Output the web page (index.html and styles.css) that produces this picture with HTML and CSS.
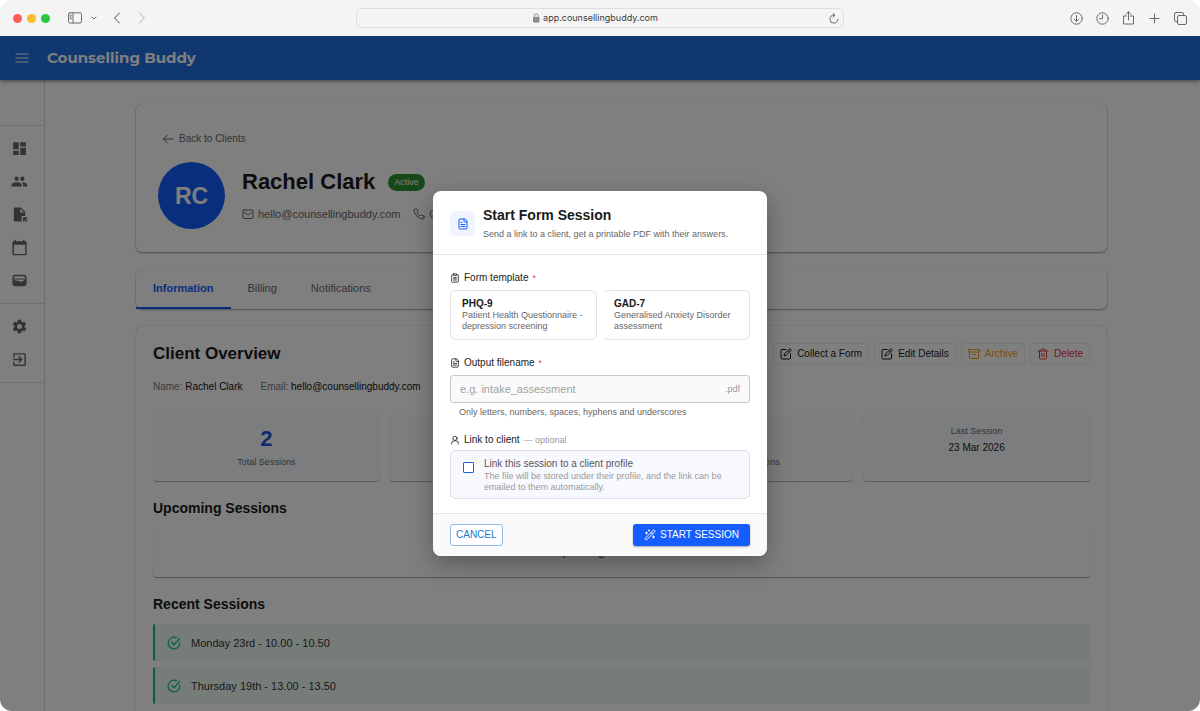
FILE: index.html
```
<!DOCTYPE html>
<html lang="en">

<head>
    <meta charset="UTF-8">
    <meta name="viewport" content="width=device-width, initial-scale=1.0">
    <title>Counselling Buddy</title>
    <link rel="stylesheet" href="styles.css">
</head>

<body>
    <!-- Icon sprite -->
    <svg class="sprite" aria-hidden="true">
        <symbol id="i-file" viewBox="0 0 24 24">
            <path d="M15 2H6a2 2 0 0 0-2 2v16a2 2 0 0 0 2 2h12a2 2 0 0 0 2-2V7Z" />
            <path d="M14 2v4a2 2 0 0 0 2 2h4M10 9H8M16 13H8M16 17H8" />
        </symbol>
        <symbol id="i-clipboard" viewBox="0 0 24 24">
            <rect x="8" y="2" width="8" height="4" rx="1" />
            <path d="M16 4h2a2 2 0 0 1 2 2v14a2 2 0 0 1-2 2H6a2 2 0 0 1-2-2V6a2 2 0 0 1 2-2h2M9 11h6M9 14h6M9 17h6" />
        </symbol>
        <symbol id="i-user" viewBox="0 0 24 24">
            <circle cx="12" cy="8" r="5" />
            <path d="M4 22v-2a6 6 0 0 1 6-6h4a6 6 0 0 1 6 6v2" />
        </symbol>
        <symbol id="i-wand" viewBox="0 0 24 24">
            <path d="m21.6 3.6-1.2-1.2a1.2 1.2 0 0 0-1.7 0L2.4 18.6a1.2 1.2 0 0 0 0 1.7l1.2 1.3a1.2 1.2 0 0 0 1.8 0L21.6 5.4a1.2 1.2 0 0 0 0-1.8M14 7l3 3M5 6v4M19 14v4M10 2v2M7 8H3M21 16h-4M11 3H9" />
        </symbol>
        <symbol id="i-arrow-left" viewBox="0 0 24 24">
            <path d="m11 4-8 8 8 8M3 12h19" />
        </symbol>
        <symbol id="i-mail" viewBox="0 0 24 24">
            <rect x="2" y="4" width="20" height="17" rx="2" />
            <path d="m5 9 7 5 7-5" />
        </symbol>
        <symbol id="i-phone" viewBox="0 0 24 24">
            <path d="M22 16.9v3a2 2 0 0 1-2.2 2 19.8 19.8 0 0 1-8.6-3.1 19.5 19.5 0 0 1-6-6A19.8 19.8 0 0 1 2.1 4.2 2 2 0 0 1 4.1 2h3a2 2 0 0 1 2 1.7c.1 1 .4 1.9.7 2.8a2 2 0 0 1-.5 2.1L8.1 9.9a16 16 0 0 0 6 6l1.3-1.3a2 2 0 0 1 2.1-.4c.9.3 1.8.6 2.8.7a2 2 0 0 1 1.7 2Z" />
        </symbol>
        <symbol id="i-edit" viewBox="0 0 24 24">
            <path d="M12 3H4a2 2 0 0 0-2 2v15a2 2 0 0 0 2 2h15a2 2 0 0 0 2-2v-8" />
            <path d="M18.4 2.6a2.1 2.1 0 0 1 3 3L12 15l-4 1 1-4ZM16 5l3 3" />
        </symbol>
        <symbol id="i-archive" viewBox="0 0 24 24">
            <rect x="1" y="3" width="22" height="5" />
            <path d="M3 8v13h18V8M9 13h6" />
        </symbol>
        <symbol id="i-trash" viewBox="0 0 24 24">
            <path d="M2 6h20M5 6v14a2 2 0 0 0 2 2h10a2 2 0 0 0 2-2V6M8 6V4a2 2 0 0 1 2-2h4a2 2 0 0 1 2 2v2M10 11v6M14 11v6" />
        </symbol>
        <symbol id="i-check" viewBox="0 0 24 24">
            <path d="M22 11v1a10 10 0 1 1-6-9.2" />
            <path d="m8 11 4 4L22 4" />
        </symbol>
    </svg>

    <div class="window">
        <header class="chrome">
            <div class="chrome-side">
                <span class="dot red"></span>
                <span class="dot yellow"></span>
                <span class="dot green"></span>
                <button class="chrome-btn sidebar-btn" type="button" aria-label="Sidebar">
                    <svg width="14" height="12" viewBox="0 0 14 12">
                        <rect x=".5" y=".8" width="13" height="10.2" rx="1.5" />
                        <path d="M5 1v10M2 3.2h1.3M2 5h1.3M2 6.8h1.3" />
                    </svg>
                </button>
                <button class="chrome-btn chevron-btn" type="button" aria-label="Tab groups">
                    <svg width="6" height="6" viewBox="0 0 6 6"><path d="m1 2 2 2 2-2" /></svg>
                </button>
                <button class="chrome-btn back-btn" type="button" aria-label="Back">
                    <svg width="8" height="12" viewBox="0 0 8 12"><path d="M6.5 1 1.5 6l5 5" /></svg>
                </button>
                <button class="chrome-btn forward-btn" type="button" aria-label="Forward">
                    <svg width="8" height="12" viewBox="0 0 8 12"><path d="m1.5 1 5 5-5 5" /></svg>
                </button>
            </div>
            <div class="address">
                <span class="address-text">
                    <svg class="lock" width="8" height="10" viewBox="0 0 8 10">
                        <rect x="1" y="4" width="6.5" height="5.5" rx="1" fill="#8a8a8a" />
                        <path d="M2.3 4V2.8a1.9 1.9 0 0 1 3.9 0V4" fill="none" stroke="#8a8a8a" />
                    </svg>
                    app.counsellingbuddy.com
                </span>
                <button class="chrome-btn" type="button" aria-label="Reload">
                    <svg width="10" height="11" viewBox="0 0 10 11"><path d="M5.5 2.2H5a4 4 0 1 0 4 4M4 .3l2 1.9-2 1.9" /></svg>
                </button>
            </div>
            <div class="chrome-side chrome-right">
                <button class="chrome-btn" type="button" aria-label="Downloads">
                    <svg width="13" height="13" viewBox="0 0 13 13"><circle cx="6.5" cy="6.5" r="5.7" /><path d="M6.5 3.5v5.7M4.3 7.2l2.2 2.2 2.2-2.2" /></svg>
                </button>
                <button class="chrome-btn" type="button" aria-label="History">
                    <svg width="13" height="13" viewBox="0 0 13 13"><circle cx="6.5" cy="6.5" r="5.7" /><path d="M6.5 3v3.7H3.5" /></svg>
                </button>
                <button class="chrome-btn" type="button" aria-label="Share">
                    <svg width="13" height="14" viewBox="0 0 13 14"><path d="M4.5 5h-3v8h10V5h-3M6.5 9V1M4 3.3 6.5.8 9 3.3" /></svg>
                </button>
                <button class="chrome-btn" type="button" aria-label="New tab">
                    <svg width="13" height="13" viewBox="0 0 13 13"><path d="M6.5 2v9M2 6.5h9" /></svg>
                </button>
                <button class="chrome-btn" type="button" aria-label="Tab overview">
                    <svg width="13" height="13" viewBox="0 0 13 13"><rect x="3.5" y="3.5" width="9" height="9" rx="1.5" /><path d="M3.5 9.5H2A1.5 1.5 0 0 1 .5 8V2A1.5 1.5 0 0 1 2 .5h6A1.5 1.5 0 0 1 9.5 2v1.5" /></svg>
                </button>
            </div>
        </header>

        <div class="app">
            <div class="topbar">
                <button class="menu-btn" type="button" aria-label="Menu">
                    <svg width="14" height="10" viewBox="0 0 14 10"><path d="M.5 1h13M.5 5h13M.5 9h13" /></svg>
                </button>
                <span class="brand">Counselling Buddy</span>
            </div>

            <div class="layout">
                <nav class="sidebar">
                    <div class="sidebar-top"></div>
                    <div class="nav-group">
                        <a class="nav-item" href="#" aria-label="Dashboard">
                            <svg viewBox="0 0 24 24"><path d="M3 13h8V3H3v10zm0 8h8v-6H3v6zm10 0h8V11h-8v10zm0-18v6h8V3h-8z" /></svg>
                        </a>
                        <a class="nav-item" href="#" aria-label="Clients">
                            <svg viewBox="0 0 24 24"><path d="M16 11c1.66 0 2.99-1.34 2.99-3S17.66 5 16 5s-3 1.34-3 3 1.34 3 3 3zm-8 0c1.66 0 2.99-1.34 2.99-3S9.66 5 8 5 5 6.34 5 8s1.34 3 3 3zm0 2c-2.33 0-7 1.17-7 3.5V19h14v-2.5c0-2.33-4.67-3.5-7-3.5zm8 0c-.29 0-.62.02-.97.05 1.16.84 1.97 1.97 1.97 3.45V19h6v-2.5c0-2.33-4.67-3.5-7-3.5z" /></svg>
                        </a>
                        <a class="nav-item" href="#" aria-label="Forms">
                            <svg viewBox="0 0 24 24"><path d="M14 2H6a2 2 0 0 0-2 2v16a2 2 0 0 0 2 2h9v-8h5V8Zm-1 7V3.5L18.5 9ZM17 16h6v2h-2.6l3.1 3.1-1.4 1.4-3.1-3.1V22h-2Z" /></svg>
                        </a>
                        <a class="nav-item" href="#" aria-label="Calendar">
                            <svg viewBox="0 0 24 24"><path d="M20 3h-1V1h-2v2H7V1H5v2H4a2 2 0 0 0-2 2v16a2 2 0 0 0 2 2h16a2 2 0 0 0 2-2V5a2 2 0 0 0-2-2zm0 18H4V8h16v13z" /></svg>
                        </a>
                        <a class="nav-item" href="#" aria-label="Billing">
                            <svg viewBox="0 0 24 24"><path d="M18 4H6a4 4 0 0 0-4 4v8a4 4 0 0 0 4 4h12a4 4 0 0 0 4-4V8a4 4 0 0 0-4-4zM4 8.5C4 7 5 6 6.5 6h11C19 6 20 7 20 8.5V9H4zm11.8 5.1a1 1 0 0 1-.9.2L4 11.2V10.5h16z" /></svg>
                        </a>
                    </div>
                    <div class="nav-group">
                        <a class="nav-item" href="#" aria-label="Settings">
                            <svg viewBox="0 0 24 24"><path d="M19.14 12.94c.04-.3.06-.61.06-.94 0-.32-.02-.64-.07-.94l2.03-1.58c.18-.14.23-.41.12-.61l-1.92-3.32c-.12-.22-.37-.29-.59-.22l-2.39.96c-.5-.38-1.03-.7-1.62-.94l-.36-2.54c-.04-.24-.24-.41-.48-.41h-3.84c-.24 0-.43.17-.47.41l-.36 2.54c-.59.24-1.13.57-1.62.94l-2.39-.96c-.22-.08-.47 0-.59.22L2.74 8.87c-.12.21-.08.47.12.61l2.03 1.58c-.05.3-.09.63-.09.94s.02.64.07.94l-2.03 1.58c-.18.14-.23.41-.12.61l1.92 3.32c.12.22.37.29.59.22l2.39-.96c.5.38 1.03.7 1.62.94l.36 2.54c.05.24.24.41.48.41h3.84c.24 0 .44-.17.47-.41l.36-2.54c.59-.24 1.13-.56 1.62-.94l2.39.96c.22.08.47 0 .59-.22l1.92-3.32c.12-.22.07-.47-.12-.61l-2.01-1.58zM12 15.6c-1.98 0-3.6-1.62-3.6-3.6s1.62-3.6 3.6-3.6 3.6 1.62 3.6 3.6-1.62 3.6-3.6 3.6z" /></svg>
                        </a>
                        <a class="nav-item" href="#" aria-label="Sign out">
                            <svg viewBox="0 0 24 24"><path d="M10.09 15.59 11.5 17l5-5-5-5-1.41 1.41L12.67 11H3v2h9.67l-2.58 2.59zM19 3H5c-1.11 0-2 .9-2 2v4h2V5h14v14H5v-4H3v4c0 1.1.89 2 2 2h14c1.1 0 2-.9 2-2V5c0-1.1-.9-2-2-2z" /></svg>
                        </a>
                    </div>
                </nav>

                <main class="main">
                    <section class="card profile">
                        <a class="back-link" href="#"><svg class="icon"><use href="#i-arrow-left" /></svg>Back to Clients</a>
                        <div class="profile-row">
                            <div class="avatar">RC</div>
                            <div class="profile-info">
                                <div class="name-row">
                                    <h1>Rachel Clark</h1>
                                    <span class="badge">Active</span>
                                </div>
                                <div class="contact-row">
                                    <span><svg class="icon"><use href="#i-mail" /></svg>hello@counsellingbuddy.com</span>
                                    <span><svg class="icon"><use href="#i-phone" /></svg>07700 900123</span>
                                </div>
                            </div>
                        </div>
                    </section>

                    <section class="card tabs">
                        <button class="tab active" type="button">Information</button>
                        <button class="tab" type="button">Billing</button>
                        <button class="tab" type="button">Notifications</button>
                    </section>

                    <section class="card overview">
                        <div class="overview-head">
                            <h2>Client Overview</h2>
                            <div class="actions">
                                <button class="action" type="button"><svg class="icon"><use href="#i-edit" /></svg>Collect a Form</button>
                                <button class="action" type="button"><svg class="icon"><use href="#i-edit" /></svg>Edit Details</button>
                                <button class="action archive" type="button"><svg class="icon"><use href="#i-archive" /></svg>Archive</button>
                                <button class="action delete" type="button"><svg class="icon"><use href="#i-trash" /></svg>Delete</button>
                            </div>
                        </div>
                        <div class="details">
                            <span>Name: <b>Rachel Clark</b></span>
                            <span>Email: <b>hello@counsellingbuddy.com</b></span>
                        </div>
                        <div class="stats">
                            <div class="stat"><strong>2</strong><span>Total Sessions</span></div>
                            <div class="stat"><strong>2</strong><span>Completed</span></div>
                            <div class="stat"><strong>0</strong><span>Upcoming Sessions</span></div>
                            <div class="stat last"><span>Last Session</span><em>23 Mar 2026</em></div>
                        </div>
                        <h3>Upcoming Sessions</h3>
                        <div class="empty">No upcoming sessions scheduled</div>
                        <h3>Recent Sessions</h3>
                        <ul class="sessions">
                            <li><svg class="icon"><use href="#i-check" /></svg>Monday 23rd - 10.00 - 10.50</li>
                            <li><svg class="icon"><use href="#i-check" /></svg>Thursday 19th - 13.00 - 13.50</li>
                        </ul>
                    </section>
                </main>
            </div>

            <div class="overlay">
                <form class="modal" role="dialog" aria-labelledby="modal-title">
                    <div class="modal-head">
                        <span class="modal-icon"><svg class="icon"><use href="#i-file" /></svg></span>
                        <div>
                            <h2 id="modal-title">Start Form Session</h2>
                            <p>Send a link to a client, get a printable PDF with their answers.</p>
                        </div>
                    </div>

                    <div class="modal-body">
                        <div class="label"><svg class="icon"><use href="#i-clipboard" /></svg>Form template <sup>*</sup></div>
                        <div class="templates">
                            <button class="template" type="button">
                                <b>PHQ-9</b>
                                <span>Patient Health Questionnaire - depression screening</span>
                            </button>
                            <button class="template" type="button">
                                <b>GAD-7</b>
                                <span>Generalised Anxiety Disorder assessment</span>
                            </button>
                        </div>

                        <label class="label" for="filename"><svg class="icon"><use href="#i-file" /></svg>Output filename <sup>*</sup></label>
                        <div class="field">
                            <input id="filename" type="text" placeholder="e.g. intake_assessment">
                            <span>.pdf</span>
                        </div>
                        <p class="helper">Only letters, numbers, spaces, hyphens and underscores</p>

                        <div class="label"><svg class="icon"><use href="#i-user" /></svg>Link to client <small>— optional</small></div>
                        <label class="link-box" for="link">
                            <input id="link" type="checkbox">
                            <span>
                                Link this session to a client profile
                                <small>The file will be stored under their profile, and the link can be emailed to them automatically.</small>
                            </span>
                        </label>
                    </div>

                    <div class="modal-foot">
                        <button class="btn-cancel" type="button">CANCEL</button>
                        <button class="btn-start" type="button"><svg class="icon"><use href="#i-wand" /></svg>START SESSION</button>
                    </div>
                </form>
            </div>
        </div>
    </div>
</body>

</html>
```
FILE: styles.css
```
* {
    margin: 0;
    padding: 0;
    box-sizing: border-box;
}

body {
    background: #fff;
    color: #1a1a1a;
    font-family: "Liberation Sans", Arial, sans-serif;
    font-size: 11px;
    line-height: 14px;
}

button,
input {
    font: inherit;
    color: inherit;
}

button {
    background: none;
    border: none;
    cursor: pointer;
}

a {
    color: inherit;
    text-decoration: none;
}

.sprite {
    display: none;
}

.icon {
    width: 12px;
    height: 12px;
    flex: none;
    fill: none;
    stroke: currentColor;
    stroke-width: 2;
    stroke-linecap: round;
    stroke-linejoin: round;
}

.window {
    display: flex;
    flex-direction: column;
    height: 100vh;
    border-radius: 12px;
    overflow: hidden;
}

/* Browser bar */
.chrome {
    display: flex;
    align-items: center;
    height: 36px;
    flex: none;
    padding: 0 13px;
    background: #f4f4f4;
}

.chrome-side {
    display: flex;
    align-items: center;
    flex: 1;
}

.chrome-right {
    justify-content: flex-end;
    gap: 13px;
}

.dot {
    width: 9px;
    height: 9px;
    margin-right: 5px;
    border-radius: 50%;
}

.red {
    background: #fc5b57;
}

.yellow {
    background: #fdbc2e;
}

.green {
    background: #27c840;
}

.chrome-btn {
    display: flex;
    color: #6b6b6b;

    svg {
        fill: none;
        stroke: currentColor;
        stroke-linecap: round;
        stroke-linejoin: round;
    }
}

.sidebar-btn {
    margin-left: 13px;
}

.chevron-btn {
    margin-left: 9px;
}

.back-btn {
    margin-left: 16px;
    color: #4a4a4a;
}

.forward-btn {
    margin-left: 17px;
    color: #b0b0b0;
}

.address {
    display: flex;
    align-items: center;
    width: 488px;
    height: 20px;
    padding: 0 4px;
    border: 1px solid #dedede;
    border-radius: 6px;
    color: #3c3c3c;
    font-family: Inter, sans-serif;
    font-size: 9px;
}

.address-text {
    display: flex;
    flex: 1;
    align-items: center;
    justify-content: center;
    gap: 3px;
}

/* App */
.app {
    position: relative;
    display: flex;
    flex: 1;
    flex-direction: column;
    min-height: 0;
    overflow: hidden;
}

.topbar {
    position: relative;
    display: flex;
    align-items: center;
    gap: 18px;
    height: 44px;
    flex: none;
    padding: 0 15px;
    background: #206ee0;
    color: #fff;
    box-shadow: 0 1px 4px rgba(0, 0, 0, 0.5);
}

.menu-btn svg {
    display: block;
    stroke: #fff;
    stroke-width: 1;
}

.brand {
    font-family: Montserrat, Inter, sans-serif;
    font-size: 15px;
    font-weight: 700;
}

.layout {
    display: flex;
    flex: 1;
    min-height: 0;
}

.sidebar {
    width: 45px;
    flex: none;
    border-right: 1px solid #dedede;
}

.sidebar-top {
    height: 46px;
    border-bottom: 1px solid #dedede;
}

.nav-group {
    padding: 6px 0;
    border-bottom: 1px solid #dedede;
}

.nav-item {
    display: flex;
    align-items: center;
    height: 33px;
    padding-left: 11px;

    svg {
        width: 17px;
        height: 17px;
        fill: #666;
    }
}

.main {
    flex: 1;
    padding: 24px 93px 0 91px;
}

.card {
    margin-bottom: 17px;
    border-radius: 6px;
    box-shadow: 0 1px 2px rgba(0, 0, 0, 0.4), 0 0 1px rgba(0, 0, 0, 0.2);
}

.profile {
    height: 148px;
    padding: 28px 22px 0;
}

.back-link {
    display: flex;
    align-items: center;
    gap: 5px;
    padding-left: 4px;
    color: #666;
    font-size: 10px;
}

.profile-row {
    display: flex;
    gap: 17px;
    margin-top: 16px;
}

.avatar {
    display: flex;
    align-items: center;
    justify-content: center;
    width: 67px;
    height: 67px;
    border-radius: 50%;
    background: #155dfc;
    color: #fff;
    font-size: 23px;
    font-weight: bold;
}

.name-row {
    display: flex;
    align-items: center;
    gap: 13px;
    margin-top: 7px;

    h1 {
        font-size: 22px;
        line-height: 26px;
    }
}

.badge {
    height: 17px;
    padding: 0 6px;
    border-radius: 9px;
    background: #2e9033;
    color: #fff;
    font-size: 9px;
    line-height: 17px;
}

.contact-row {
    display: flex;
    gap: 13px;
    margin-top: 12px;
    color: #666;

    span {
        display: flex;
        align-items: center;
        gap: 4px;
    }
}

.tabs {
    display: flex;
    height: 40px;
}

.tab {
    padding: 0 17px;
    border-bottom: 2px solid transparent;
    color: #666;
}

.tab.active {
    border-color: #155dfc;
    color: #155dfc;
    font-weight: bold;
}

.overview {
    height: 460px;
    padding: 17px;
    box-shadow: 0 0 1px rgba(0, 0, 0, 0.5);

    h3 {
        margin-top: 18px;
        font-size: 14px;
        line-height: 18px;
    }
}

.overview-head {
    display: flex;
    align-items: center;
    justify-content: space-between;

    h2 {
        font-size: 17px;
        line-height: 22px;
    }
}

.actions {
    display: flex;
    gap: 5px;
}

.action {
    display: flex;
    align-items: center;
    gap: 5px;
    height: 22px;
    padding: 0 6px;
    border: 1px solid #eee;
    border-radius: 3px;
    font-size: 10px;
}

.archive {
    color: #fb9c0c;
}

.delete {
    color: #e53935;
}

.details {
    display: flex;
    gap: 18px;
    margin-top: 15px;
    color: #777;
    font-size: 10px;

    b {
        color: #111;
        font-weight: normal;
    }
}

.stats {
    display: grid;
    grid-template-columns: repeat(4, 1fr);
    gap: 10px;
    margin-top: 20px;
}

.stat {
    display: flex;
    flex-direction: column;
    align-items: center;
    height: 67px;
    padding-top: 12px;
    border-radius: 4px;
    background: #f8fbff;
    box-shadow: 0 1px 1px rgba(0, 0, 0, 0.3);
    color: #666;
    font-size: 9px;

    strong {
        color: #2257dd;
        font-size: 22px;
        line-height: 26px;
    }

    span {
        margin-top: 3px;
    }

    em {
        margin-top: 3px;
        color: #222;
        font-size: 10px;
        font-style: normal;
    }
}

.stat.last {
    padding-top: 7px;
}

.empty {
    height: 50px;
    margin-top: 10px;
    border-radius: 3px;
    box-shadow: 0 1px 1px rgba(0, 0, 0, 0.35);
    line-height: 50px;
    text-align: center;
}

.sessions {
    margin-top: 11px;
    list-style: none;

    li {
        display: flex;
        align-items: center;
        gap: 10px;
        height: 37px;
        margin-bottom: 6px;
        padding-left: 12px;
        border-left: 2px solid #10b981;
        border-radius: 2px;
        background: #ecf8f1;
        color: #333;
    }

    .icon {
        width: 14px;
        height: 14px;
        color: #10b981;
    }
}

/* Start Form Session dialog */
.overlay {
    position: absolute;
    inset: 0;
    display: flex;
    align-items: center;
    justify-content: center;
    background: rgba(0, 0, 0, 0.5);
}

.modal {
    width: 334px;
    border-radius: 8px;
    background: #fff;
    box-shadow: 0 8px 24px rgba(0, 0, 0, 0.3);
    overflow: hidden;
}

.modal-head {
    display: flex;
    align-items: center;
    gap: 8px;
    height: 64px;
    padding: 2px 17px 0;
    border-bottom: 1px solid #e4e4e4;

    h2 {
        font-size: 14px;
        line-height: 18px;
    }

    p {
        margin-top: 3px;
        color: #666;
        font-size: 9px;
    }
}

.modal-icon {
    display: flex;
    align-items: center;
    justify-content: center;
    width: 25px;
    height: 25px;
    border-radius: 6px;
    background: #eff4ff;
    color: #155dfc;
}

.modal-body {
    padding: 16px 17px 14px;
}

.label {
    display: flex;
    align-items: center;
    gap: 4px;
    color: #222;
    font-size: 10px;

    .icon {
        width: 10px;
        height: 10px;
    }

    sup {
        color: #e53935;
    }

    small {
        color: #999;
        font-size: 9px;
    }
}

.templates {
    display: grid;
    grid-template-columns: 1fr 1fr;
    gap: 6px;
    margin: 5px 0 16px;
}

.template {
    height: 50px;
    padding: 0 11px;
    border: 1px solid #e2e2e2;
    border-radius: 6px;
    text-align: left;

    b {
        display: block;
        font-size: 10px;
        line-height: 12px;
    }

    span {
        display: block;
        color: #666;
        font-size: 9px;
        line-height: 11px;
    }
}

.template + .template {
    padding: 0 10px;
    border-left-color: transparent;
}

.field {
    display: flex;
    align-items: center;
    height: 28px;
    margin-top: 5px;
    padding: 0 9px;
    border: 1px solid #c8c8c8;
    border-radius: 3px;
    background: #fafafa;

    input {
        flex: 1;
        min-width: 0;
        border: none;
        outline: none;
        background: none;
    }

    input::placeholder {
        color: #a2a2a2;
    }

    span {
        color: #999;
        font-size: 9px;
    }
}

.helper {
    margin: 4px 0 16px 9px;
    color: #666;
    font-size: 9px;
    line-height: 10px;
}

.link-box {
    display: flex;
    gap: 10px;
    height: 49px;
    margin-top: 3px;
    padding: 6px 12px;
    border: 1px solid #dde0e8;
    border-radius: 6px;
    background: #f8f9ff;
    color: #555;
    font-size: 10px;

    input {
        width: 11px;
        height: 11px;
        margin-top: 5px;
        flex: none;
        appearance: none;
        border: 1px solid #2260dc;
        border-radius: 1px;
        background: #fff;
    }

    small {
        display: block;
        color: #999;
        font-size: 9px;
        line-height: 11px;
    }
}

.modal-foot {
    display: flex;
    justify-content: space-between;
    padding: 10px 17px;
    border-top: 1px solid #e4e4e4;
    background: #fafafa;

    button {
        display: flex;
        align-items: center;
        height: 22px;
        border-radius: 3px;
        font-size: 10px;
    }
}

.btn-cancel {
    padding: 0 5px;
    border: 1px solid #8fbbe8;
    background: #fff;
    color: #2478d0;
}

.btn-start {
    gap: 4px;
    padding: 0 11px;
    background: #155dfc;
    color: #fff;
    box-shadow: 0 1px 2px rgba(0, 0, 0, 0.35);
}
```
